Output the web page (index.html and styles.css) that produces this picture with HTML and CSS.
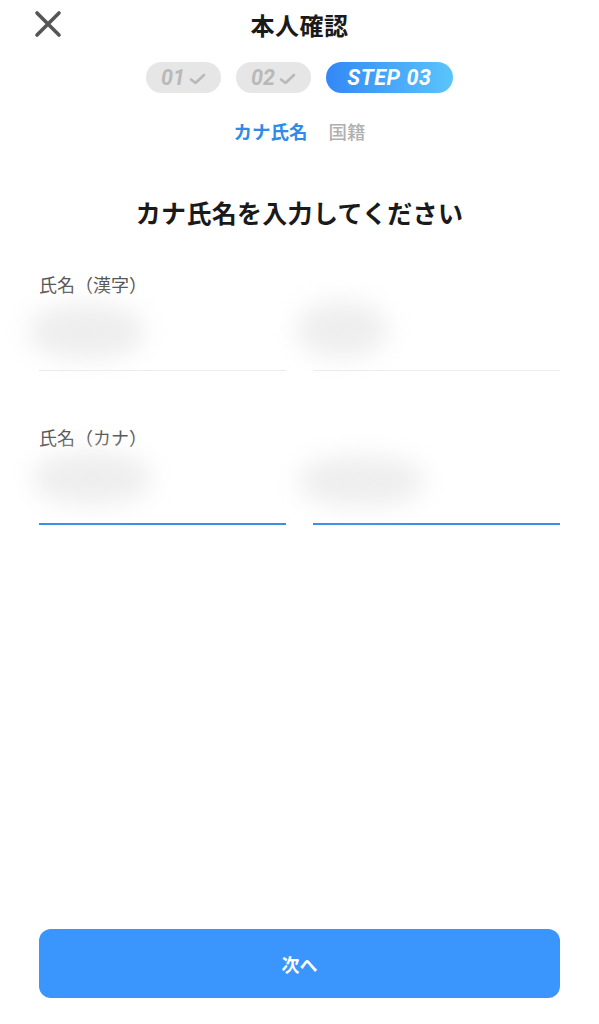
FILE: index.html
```html
<!DOCTYPE html>
<html lang="ja">
<head>
<meta charset="utf-8">
<link rel="stylesheet" href="styles.css">
</head>
<body>
<div class="page">
  <header class="header">
    <button class="close" aria-label="閉じる">
      <svg width="28" height="28" viewBox="0 0 28 28"><path d="M3 3 L25 25 M25 3 L3 25" stroke="#555" stroke-width="3.6" stroke-linecap="round" fill="none"/></svg>
    </button>
    <h1 class="title">本人確認</h1>
    <div></div>
  </header>

  <div class="steps">
    <span class="pill done">01<svg class="chk" width="17" height="14" viewBox="0 0 17 14"><path d="M2 7.5 L6.5 11 L15 3" stroke="#b9b9b9" stroke-width="2.6" stroke-linecap="round" stroke-linejoin="round" fill="none"/></svg></span>
    <span class="pill done">02<svg class="chk" width="17" height="14" viewBox="0 0 17 14"><path d="M2 7.5 L6.5 11 L15 3" stroke="#b9b9b9" stroke-width="2.6" stroke-linecap="round" stroke-linejoin="round" fill="none"/></svg></span>
    <span class="pill active">STEP 03</span>
  </div>

  <nav class="tabs">
    <span class="tab current">カナ氏名</span>
    <span class="tab">国籍</span>
  </nav>

  <h2 class="heading">カナ氏名を入力してください</h2>

  <section class="form">
    <div class="group">
      <div class="label">氏名（漢字）</div>
      <div class="row">
        <div class="field"><div class="blob b1"></div></div>
        <div class="field"><div class="blob b2"></div></div>
      </div>
    </div>
    <div class="group second">
      <div class="label">氏名（カナ）</div>
      <div class="row">
        <div class="field focus"><div class="blob b3"></div></div>
        <div class="field focus"><div class="blob b4"></div></div>
      </div>
    </div>
  </section>

  <footer class="footer">
    <button class="next">次へ</button>
  </footer>
</div>
</body>
</html>
```

FILE: styles.css
```css
html, body {
  margin: 0;
  padding: 0;
  background: #fff;
}
body {
  font-family: "Noto Sans CJK JP", "Noto Sans", sans-serif;
  color: #1a1a1a;
}
.page {
  min-height: 1024px;
  display: flex;
  flex-direction: column;
}
.header {
  height: 50px;
  display: grid;
  grid-template-columns: 1fr auto 1fr;
  align-items: center;
}
.close {
  justify-self: start;
  margin-left: 34px;
  margin-top: -2px;
  padding: 0;
  border: 0;
  background: none;
  width: 28px;
  height: 28px;
  display: flex;
}
.title {
  margin: 0;
  font-size: 24px;
  font-weight: 700;
  line-height: 30px;
  color: #1a1a1a;
  letter-spacing: 0.5px;
}
.steps {
  margin-top: 12px;
  display: flex;
  justify-content: center;
  gap: 15px;
}
.pill {
  height: 31px;
  border-radius: 16px;
  display: inline-flex;
  align-items: center;
  justify-content: center;
  font-family: "Roboto", "Liberation Sans", sans-serif;
  font-style: italic;
  font-weight: 700;
  font-size: 21.5px;
}
.pill.done {
  background: #e6e6e6;
  color: #b9b9b9;
  width: 75px;
  gap: 4px;
}
.pill.active {
  width: 127px;
  color: #fff;
  letter-spacing: 0.6px;
  background: linear-gradient(90deg, #3388f6 0%, #5ac5fb 100%);
}
.chk {
  margin-top: 2px;
}
.tabs {
  margin-top: 25px;
  display: flex;
  justify-content: center;
  gap: 21px;
}
.tab {
  font-size: 18.5px;
  line-height: 26px;
  font-weight: 500;
  color: #b0b0b0;
}
.tab.current {
  color: #2e8be8;
  font-weight: 700;
}
.heading {
  margin: 51px 0 0;
  text-align: center;
  font-size: 25px;
  line-height: 34px;
  font-weight: 700;
  color: #1a1a1a;
  letter-spacing: 0.3px;
}
.form {
  padding: 0 39px;
  margin-top: 43px;
}
.group.second {
  margin-top: 54px;
}
.label {
  font-size: 18px;
  line-height: 24px;
  color: #555;
}
.row {
  display: grid;
  grid-template-columns: 1fr 1fr;
  gap: 27px;
}
.field {
  height: 74px;
  border-bottom: 1.5px solid #ececec;
  display: flex;
  align-items: center;
}
.field.focus {
  border-bottom: 2px solid #3b8ee8;
}
.blob {
  background: #eeeeee;
  border-radius: 45%;
  filter: blur(12px);
}
.b1 { width: 115px; height: 55px; margin-left: -10px; margin-top: -4px; }
.b2 { width: 90px; height: 55px; margin-left: -16px; margin-top: -8px; }
.b3 { width: 118px; height: 52px; margin-left: -6px; margin-top: -16px; }
.b4 { width: 125px; height: 50px; margin-left: -14px; margin-top: -10px; }
.footer {
  margin-top: auto;
  padding: 0 39px 26px;
}
.next {
  width: 100%;
  height: 69px;
  border: 0;
  border-radius: 12px;
  background: #3a95fd;
  color: #fff;
  font-family: "Noto Sans CJK JP", "Noto Sans", sans-serif;
  font-size: 18px;
  font-weight: 700;
}
```
